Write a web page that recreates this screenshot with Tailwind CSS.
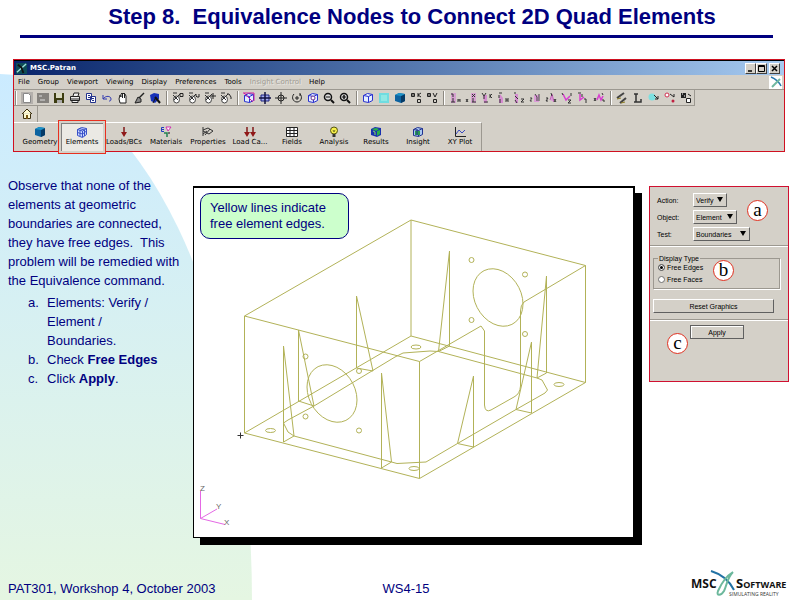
<!DOCTYPE html>
<html lang="en">
<head>
  <meta charset="UTF-8" />
  <meta name="viewport" content="width=device-width, initial-scale=1" />
  <title>Step 8. Equivalence Nodes to Connect 2D Quad Elements</title>
  <script src="https://cdn.jsdelivr.net/npm/@tailwindcss/browser@4"></script>
</head>
<body class="relative min-h-screen flex flex-col bg-white text-[#000080] font-['Liberation_Sans',sans-serif]">

  <!-- background sweep -->
  <div class="absolute left-0 top-[74px] bottom-0 -z-10 w-[252px] rounded-tr-[100%] bg-linear-to-b from-[#cbebff] to-[#e5f6e2]"></div>

  <!-- icon sprite -->
  <svg class="hidden">
    <symbol id="new" viewBox="0 0 12 12"><rect width="12" height="12" fill="#b4b0ac"/><path d="M2.500 1.500h5l2 2v7h-7z" fill="#fff" stroke="#888"/></symbol>
    <symbol id="open" viewBox="0 0 12 12"><rect y="1" width="12" height="10" fill="#85827e"/><path d="M2 4h3M3 8h5" stroke="#ddd"/></symbol>
    <symbol id="save" viewBox="0 0 12 12"><path d="M1 1h10v10H1z" fill="#3c3c10"/><path d="M3 1h6v5H3z" fill="#d8d8c0"/><path d="M4 8h5v3H4z" fill="#aaa"/></symbol>
    <symbol id="print" viewBox="0 0 12 12"><path d="M4 4l1-3h5l-1 3M1.500 4.500h9v4h-9zM3 8.500v2h6v-2" fill="#eee" stroke="#222"/><path d="M2 7h8" stroke="#222"/></symbol>
    <symbol id="copy" viewBox="0 0 12 12"><path d="M1.500 1.500h5v6h-5zM5.500 4.500h5v6h-5z" fill="#fff" stroke="#23338c"/><path d="M3 3.500h2M3 5.500h2M7 6.500h2M7 8.500h2" stroke="#23338c"/></symbol>
    <symbol id="undo" viewBox="0 0 12 12"><path d="M2 3v4h4M2 7c3-4 8-3 8 0 0 2-1 2-2 2" fill="none" stroke="#3038b0"/></symbol>
    <symbol id="hand" viewBox="0 0 12 12"><path d="M3 11L2 7l1-4 1 2 0-3 1-1 1 1 1-1 1 1 1 2v7z" fill="#fff" stroke="#222"/><path d="M5.500 2v4M7.500 2v4" stroke="#222"/></symbol>
    <symbol id="brush" viewBox="0 0 12 12"><path d="M11 1L6 6" stroke="#222" stroke-width="1.500"/><path d="M5 5l3 2v3l-6 1z" fill="#888" stroke="#222"/></symbol>
    <symbol id="render" viewBox="0 0 12 12"><path d="M1 3l4-2 5 1v5l-4 4-4-2z" fill="#1630b8"/><path d="M6 5l5 6" stroke="#111" stroke-width="2"/><path d="M4 11l3-6" stroke="#111"/></symbol>
    <symbol id="mouse" viewBox="0 0 12 12"><ellipse cx="4.500" cy="7.500" rx="3" ry="3.500" fill="#fff" stroke="#444"/><path d="M1 3l5 5M2 8l6-6M1 1h4" stroke="#333"/></symbol>
    <symbol id="pick1" viewBox="0 0 12 12"><use href="#mouse"/><path d="M8 1.500h3v3H8z" fill="none" stroke="#222"/></symbol>
    <symbol id="pick2" viewBox="0 0 12 12"><use href="#mouse"/><path d="M8 2v2l1 1h2V2" fill="none" stroke="#222"/></symbol>
    <symbol id="pick3" viewBox="0 0 12 12"><use href="#mouse"/><path d="M9 1v6M7 4h5" stroke="#222"/></symbol>
    <symbol id="pick4" viewBox="0 0 12 12"><use href="#mouse"/><path d="M7 2h2l2 3v2" fill="none" stroke="#222"/></symbol>
    <symbol id="cube" viewBox="0 0 12 12"><path d="M1.500 3.500l4-2 5 1v6l-4 2-5-1zM1.500 3.500l5 1v6M6.500 4.500l4-2" fill="#e4eeff" stroke="#2830d0"/></symbol>
    <symbol id="fit" viewBox="0 0 12 12"><use href="#cube"/><path d="M0 1h11v8M1 1l9 9" fill="none" stroke="#d020a0"/></symbol>
    <symbol id="center" viewBox="0 0 12 12"><path d="M2 3h8v6H2z" fill="#a5adf0" stroke="#1a2080"/><path d="M6 0v12M0 6h12" stroke="#101040" stroke-width="1.500"/></symbol>
    <symbol id="target" viewBox="0 0 12 12"><circle cx="6" cy="6" r="3" fill="none" stroke="#222"/><path d="M6 0v12M0 6h12" stroke="#222"/></symbol>
    <symbol id="spin" viewBox="0 0 12 12"><path d="M3 2c-3 3-1 8 3 8s6-5 3-8M9 1v3M4 6h4M6 4v4" fill="none" stroke="#222"/></symbol>
    <symbol id="fitall" viewBox="0 0 12 12"><use href="#cube"/><circle cx="6" cy="6" r="2" fill="#fff" stroke="#703090"/></symbol>
    <symbol id="zoomout" viewBox="0 0 12 12"><circle cx="5" cy="5" r="3.500" fill="#ddd" stroke="#111" stroke-width="1.500"/><path d="M8 8l3 3" stroke="#111" stroke-width="2"/><path d="M3 5h4" stroke="#111"/></symbol>
    <symbol id="zoomin" viewBox="0 0 12 12"><use href="#zoomout"/><path d="M5 3v4" stroke="#111" stroke-width="1.500"/></symbol>
    <symbol id="hidden" viewBox="0 0 12 12"><path d="M1 1h10v10H1z" fill="#6fdce0"/><path d="M3 3h6v6H3z" fill="#8fe8e4"/></symbol>
    <symbol id="solid" viewBox="0 0 12 12"><path d="M1 3l4-2 6 1v7l-4 2-6-2z" fill="#0b62a0"/><path d="M7 4l4-2v7l-4 2z" fill="#053a66"/><path d="M1 3l4-2 6 1-4 2z" fill="#1d93c8"/></symbol>
    <symbol id="label1" viewBox="0 0 12 12"><path d="M1.500 1.500h3v3h-3zM7.500 7.500h3v3h-3zM8 1v4M11 1L8 3l3 2M1 3h3" fill="none" stroke="#222"/></symbol>
    <symbol id="label2" viewBox="0 0 12 12"><path d="M1.500 1.500h3v3h-3zM7.500 7.500h3v3h-3zM7 1l2 4 2-4M1 3h3" fill="none" stroke="#222"/></symbol>
    <symbol id="view1" viewBox="0 0 12 12"><path d="M2 1h5v10H2z" fill="#d5a0d0"/><path d="M2 2h2v3M2 10h4M4 6v4M9 7v3M11 7v3M9 8h2" fill="none" stroke="#333"/></symbol>
    <symbol id="view2" viewBox="0 0 12 12"><path d="M6 1h5v10H6z" fill="#d5a0d0"/><path d="M1 7l2 3M3 7l-2 3M7 2l3 3M10 2L7 5M7 10h4M8 6v4" stroke="#333"/></symbol>
    <symbol id="view3" viewBox="0 0 12 12"><path d="M2 3h4v8H3z" fill="#d58cd0"/><path d="M1 1l2 3 2-3M3 4v3M9 2v4M11 2L9 4l2 2M3 10h4" fill="none" stroke="#333"/></symbol>
    <symbol id="view4" viewBox="0 0 12 12"><path d="M3 2l3 4v5H2V6z" fill="#d58cd0"/><path d="M2 1h3M2 3v3M3 7v4M9 6v4M11 6v4M9 8h2" fill="none" stroke="#333"/></symbol>
    <symbol id="view5" viewBox="0 0 12 12"><path d="M2 2h3v9H2z" fill="#d58cd0"/><path d="M1 1h2M2 4l3 3M2 8l2 3M8 7h3l-3 3h3" fill="none" stroke="#333"/></symbol>
    <symbol id="view6" viewBox="0 0 12 12"><path d="M5 3h5v7H5z" fill="#dc9cd8"/><path d="M1 6h2l-2 3h2M6 2l2 3v4M10 2v7" fill="none" stroke="#444"/></symbol>
    <symbol id="view7" viewBox="0 0 12 12"><path d="M5 8l2-6 2 8" fill="#dc9cd8" stroke="#c060b8"/><path d="M1 6h2l-2 3h2M6 1l1 3M9 7l2 3M11 7l-2 3" fill="none" stroke="#333"/></symbol>
    <symbol id="view8" viewBox="0 0 12 12"><path d="M2 2l3 6 4-4" fill="none" stroke="#d83cd0" stroke-width="1.500"/><path d="M1 1l1 2M10 1v3M7 8h3l-3 3h3" fill="none" stroke="#333"/></symbol>
    <symbol id="view9" viewBox="0 0 12 12"><path d="M3 2v6l4-3" fill="none" stroke="#d83cd0" stroke-width="1.500"/><path d="M1 1h3M5 2v3M8 6v2h2M8 10h2" fill="none" stroke="#333"/></symbol>
    <symbol id="view10" viewBox="0 0 12 12"><path d="M4 8l2-5 2 5 2-4" fill="none" stroke="#d83cd0" stroke-width="1.500"/><path d="M1 6l2 3M3 6L1 9M9 1l1 2M9 8h2v2" fill="none" stroke="#333"/></symbol>
    <symbol id="sweep" viewBox="0 0 12 12"><path d="M1 6l7-5M4 11l6-5" stroke="#444" stroke-width="2"/><path d="M1 7l4-1M5 11l4-1" stroke="#8a7a20"/></symbol>
    <symbol id="corner" viewBox="0 0 12 12"><path d="M2 2h4M4 2v8M2 10h7V7" fill="none" stroke="#333" stroke-width="1.500"/></symbol>
    <symbol id="plot" viewBox="0 0 12 12"><circle cx="4" cy="5" r="3.500" fill="#7ce0e0"/><path d="M6 3l4 4v-3M7 7h3" fill="none" stroke="#222"/></symbol>
    <symbol id="erase" viewBox="0 0 12 12"><circle cx="3" cy="3" r="2" fill="#fff" stroke="#d03050"/><path d="M6 2l4 3V2" fill="none" stroke="#222"/><circle cx="9" cy="9" r="1.500" fill="#c02040"/></symbol>
    <symbol id="lock" viewBox="0 0 12 12"><path d="M1 1h5v5H1z" fill="#222"/><path d="M2 2h1M4 4h1" stroke="#fff"/><path d="M8 2l3 2M6.500 6.500h4v4h-4z" fill="#fff" stroke="#222"/></symbol>
    <symbol id="home" viewBox="0 0 12 12"><path d="M1 6l5-5 5 5M2.500 5.500v5h7v-5" fill="#fffbd0" stroke="#3c3010"/><path d="M5 7h2v4H5z" fill="#7a5a18"/></symbol>
    <symbol id="elements" viewBox="0 0 12 12"><path d="M1.500 3.500l4-2 5 1v6l-4 3-5-2zM1.500 3.500l5 1.500v6M6.500 5l4-2.500M1.500 6.500l5 1.500 4-3M4 4v6M3.500 2.500l5 1.500v6" fill="#cfdcff" stroke="#3850c8"/></symbol>
    <symbol id="loads" viewBox="0 0 12 12"><path d="M6 1v6" stroke="#801818" stroke-width="1.500"/><path d="M3 6h6l-3 5z" fill="#901818"/></symbol>
    <symbol id="loadcase" viewBox="0 0 12 12"><path d="M3 1v6M9 1v6" stroke="#801818" stroke-width="1.500"/><path d="M0 6h6l-3 5zM6 6h6l-3 5z" fill="#901818"/></symbol>
    <symbol id="materials" viewBox="0 0 12 12"><path d="M4 1.500H1.500v4H4M1 3.500h3" stroke="#203cc0" fill="none"/><path d="M6 1l2 4 3-4z" fill="#fff" stroke="#d030b0"/><path d="M4 7h3v4" fill="none" stroke="#208050" stroke-width="1.500"/><path d="M8 7h2" stroke="#111"/></symbol>
    <symbol id="properties" viewBox="0 0 12 12"><path d="M1 1v9M1 4l5-2 5 3-4 3-6-3M3 9l5-6M1 8l4-3" fill="none" stroke="#333"/></symbol>
    <symbol id="fields" viewBox="0 0 12 12"><path d="M.5 1.500h11v9H.5zM.5 4.500h11M.5 7.500h11M4 2v9M8 2v9" fill="#fff" stroke="#222"/></symbol>
    <symbol id="analysis" viewBox="0 0 12 12"><circle cx="6" cy="4.500" r="3.500" fill="#f6ef4a" stroke="#555510"/><path d="M4.500 8h3v3h-3z" fill="#333"/><path d="M5 4l1 2 1-2" fill="none" stroke="#777720"/></symbol>
    <symbol id="results" viewBox="0 0 12 12"><path d="M1 3l4-2 6 1v7l-4 2-6-2z" fill="#1830b0"/><path d="M2 3l4-1 3 1-3 2zM7 5l3-1v4l-3 2z" fill="#28b048"/><path d="M3 5l2 1v3" stroke="#8cdc60" fill="none"/></symbol>
    <symbol id="insight" viewBox="0 0 12 12"><path d="M1.500 3.500l4-2 5 1v6l-4 2-5-1zM1.500 3.500l5 1v6M6.500 4.500l4-2" fill="#a8c8f0" stroke="#203090"/><path d="M3 5h5v4H3z" fill="#2a9a50"/><path d="M5 3v6" stroke="#203090"/></symbol>
    <symbol id="xyplot" viewBox="0 0 12 12"><path d="M1.500 1v9.500H12" fill="none" stroke="#222"/><path d="M2 8l3-4 3 3 3-3" fill="none" stroke="#3848c0"/></symbol>
  </svg>

  <header class="px-5 pt-[5px]">
    <h1 class="pl-6 text-center text-[22px] leading-6 font-bold whitespace-pre">Step 8.  Equivalence Nodes to Connect 2D Quad Elements</h1>
    <div class="mt-[6px] mr-[7px] h-[3px] bg-[#000080]"></div>
  </header>

  <!-- application window -->
  <section class="mt-[21px] ml-[13px] mr-[15px] border border-[#d01020] bg-[#d4d0c8] text-black font-['DejaVu_Sans',sans-serif] text-[7px]">
    <div class="flex h-[15px] items-center gap-[3px] border-t border-black bg-linear-to-r from-[#0a246a] to-[#a6caf0] pl-[2px] pr-1">
      <svg class="size-[11px]" viewBox="0 0 12 12"><rect width="12" height="12" fill="#0d4c58"/><path d="M1 10L11 1" stroke="#9fe0d8" stroke-width="1.500"/><path d="M2 2l4 3 2 6" fill="none" stroke="#111" stroke-width="2"/></svg>
      <span class="flex-1 font-bold text-white">MSC.Patran</span>
      <div class="flex">
        <button aria-label="Minimize" class="size-[11px] border border-white border-r-[#404040] border-b-[#404040] bg-[#d4d0c8]"><svg viewBox="0 0 9 9"><path d="M2 7h4" stroke="#000" stroke-width="1.500"/></svg></button>
        <button aria-label="Maximize" class="size-[11px] border border-white border-r-[#404040] border-b-[#404040] bg-[#d4d0c8]"><svg viewBox="0 0 9 9"><path d="M1.500 1.500h6v6h-6zM1.500 2.500h6" fill="none" stroke="#000"/></svg></button>
        <button aria-label="Close" class="ml-[2px] size-[11px] border border-white border-r-[#404040] border-b-[#404040] bg-[#d4d0c8]"><svg viewBox="0 0 9 9"><path d="M2 2l5 5M7 2L2 7" stroke="#000" stroke-width="1.500"/></svg></button>
      </div>
    </div>

    <div class="flex h-[15px] items-center justify-between border-b border-[#9c9890] pl-1 pr-[2px]">
      <nav class="flex gap-2">
        <button>File</button>
        <button>Group</button>
        <button>Viewport</button>
        <button>Viewing</button>
        <button>Display</button>
        <button>Preferences</button>
        <button>Tools</button>
        <button disabled class="text-[#a09c94] [text-shadow:1px_1px_0_#e8e6e2]">Insight Control</button>
        <button>Help</button>
      </nav>
      <svg class="size-[13px]" viewBox="0 0 13 13"><rect width="13" height="13" fill="#fff"/><path d="M2 1c5 2 8 5 10 9" fill="none" stroke="#2a7ab0" stroke-width="1.500"/><path d="M11 3L3 11" stroke="#70b8a0" stroke-width="2"/></svg>
    </div>

    <div id="toolbar" class="flex h-4 w-fit items-center gap-[3px] border-r border-b border-[#9c9890] pl-px"></div>

    <div class="flex h-4 items-center pl-[7px]">
      <button aria-label="Home" class="flex h-4 w-[17px] items-center border-r border-[#9c9890]"><svg class="size-3"><use href="#home"/></svg></button>
    </div>

    <div id="tabs" class="flex h-[29px] w-fit border-t border-r border-white border-r-[#9c9890] pl-[5px]"></div>
  </section>

  <main class="mt-6 flex flex-1 items-start pr-[11px]">
    <div class="w-[193px] shrink-0 pl-2 text-[13px] leading-[19px]">
      <p class="whitespace-pre">Observe that none of the
elements at geometric
boundaries are connected,
they have free edges.  This
problem will be remedied with
the Equivalence command.</p>
      <ol class="mt-[3px] ml-5">
        <li class="flex"><span class="w-[19px]">a.</span><span>Elements: Verify /<br>Element /<br>Boundaries.</span></li>
        <li class="flex"><span class="w-[19px]">b.</span><span>Check <b>Free Edges</b></span></li>
        <li class="flex"><span class="w-[19px]">c.</span><span>Click <b>Apply</b>.</span></li>
      </ol>
    </div>

    <figure class="relative mt-[10px] min-w-0 flex-1 border border-t-2 border-r-2 border-black bg-white shadow-[7px_7px_0_#000]">
      <figcaption class="absolute left-[6px] top-[5px] w-[149px] rounded-[10px] border border-[#000080] bg-[#ccffcc] py-[6px] pl-[9px] text-[13px] leading-4">Yellow lines indicate<br>free element edges.</figcaption>
      <svg class="block w-full" viewBox="194 188 439 349" fill="none" stroke="#b2b258">
        <!-- outer box, right front edge broken by the notch -->
        <path d="M244.500 316L411 220 585.500 265.500V382.500L419.500 478.500 244.500 433V316L419.500 361.500V478.500M411 220V336L585.500 382.500M411 336L244.500 433"/>
        <path d="M585.500 265.500L524 302Q520.500 305 520.500 311V386Q520 394 514 397L491 410Q485 413 484.500 405V331L481 326 419.500 361.500"/>
        <!-- flange inner loop -->
        <path d="M283.500 423L288 432 294 436 391.500 462 397 463.500 426 462 457.500 443.500 516 409.500 545 393 547.500 390 542 380 537 378 438.500 351.500 430 351 403 353 395 357 314 406 288 420Z"/>
        <!-- ribs -->
        <path d="M298.500 330V401L314 406ZM356.500 296V368L373 371ZM283.500 346V442L294 436ZM381.500 373V468L391.500 462ZM449.500 251V346L438.500 351.500ZM546.500 276V373L537 378ZM531.500 342V413L516 409.500ZM473.500 376V447L457.500 443.500Z"/>
        <!-- bores and bolt holes -->
        <circle r="1" transform="matrix(25 6.500 0 28 498 297.500)" vector-effect="non-scaling-stroke"/>
        <circle r="1" transform="matrix(25 6.500 0 28 332 393.500)" vector-effect="non-scaling-stroke"/>
        <circle cx="471.500" cy="260" r="2.500"/><circle cx="525" cy="274.500" r="2.500"/><circle cx="471.500" cy="320" r="2.500"/><circle cx="525" cy="334" r="2.500"/>
        <circle cx="305.500" cy="356.500" r="2.500"/><circle cx="359" cy="371" r="2.500"/><circle cx="305.500" cy="416.500" r="2.500"/><circle cx="359" cy="430.500" r="2.500"/>
        <ellipse cx="270.500" cy="430.500" rx="5" ry="2"/><ellipse cx="414" cy="468.500" rx="5" ry="2"/><ellipse cx="559" cy="384.500" rx="5" ry="2"/><ellipse cx="416" cy="347" rx="5" ry="2"/>
        <path d="M237.500 435.500h6M240.500 432.500v6" stroke="#333"/>
        <!-- axis triad -->
        <path d="M200.500 491V518.500L217 509M200.500 518.500L225 524.500" stroke="#e468e4"/>
        <g fill="#666" stroke="none" font-family="Liberation Sans, sans-serif" font-size="8">
          <text x="200" y="491">Z</text><text x="216" y="509">Y</text><text x="224" y="525">X</text>
        </g>
      </svg>
    </figure>

    <!-- Elements form -->
    <form class="relative mt-[10px] ml-[14px] h-[196px] w-[140px] shrink-0 border border-[#d01030] bg-[#d4d0c8] text-[7px] leading-[9px] text-black">
      <div class="flex flex-col gap-[3px] border-b border-[#9c9890] pt-[6px] pb-1 pl-[7px] shadow-[0_1px_0_#fff]">
        <div class="flex items-center">
          <label for="action" class="w-9">Action:</label>
          <span class="relative">
            <select id="action" class="block h-[14px] w-[34px] appearance-none border border-white border-r-[#606060] border-b-[#606060] pl-[2px]"><option>Verify</option></select>
            <svg class="pointer-events-none absolute right-1 top-1 h-[5px] w-[6px]" viewBox="0 0 6 5"><path d="M0 0h6L3 5z"/></svg>
          </span>
        </div>
        <div class="flex items-center">
          <label for="object" class="w-9">Object:</label>
          <span class="relative">
            <select id="object" class="block h-[14px] w-[44px] appearance-none border border-white border-r-[#606060] border-b-[#606060] pl-[2px]"><option>Element</option></select>
            <svg class="pointer-events-none absolute right-1 top-1 h-[5px] w-[6px]" viewBox="0 0 6 5"><path d="M0 0h6L3 5z"/></svg>
          </span>
        </div>
        <div class="flex items-center">
          <label for="test" class="w-9">Test:</label>
          <span class="relative">
            <select id="test" class="block h-[14px] w-[57px] appearance-none border border-white border-r-[#606060] border-b-[#606060] pl-[2px]"><option>Boundaries</option></select>
            <svg class="pointer-events-none absolute right-1 top-1 h-[5px] w-[6px]" viewBox="0 0 6 5"><path d="M0 0h6L3 5z"/></svg>
          </span>
        </div>
      </div>

      <fieldset class="mt-2 ml-[3px] mr-2 h-[35px] border border-[#9c9890] pl-1 shadow-[1px_1px_0_#fff]">
        <legend class="px-px">Display Type</legend>
        <label class="flex items-center gap-[2px]"><input type="radio" name="display" checked class="size-[7px] appearance-none rounded-full border border-[#707070] bg-white checked:bg-black checked:shadow-[inset_0_0_0_1px_#fff]">Free Edges</label>
        <label class="mt-[3px] flex items-center gap-[2px]"><input type="radio" name="display" class="size-[7px] appearance-none rounded-full border border-[#707070] bg-white checked:bg-black">Free Faces</label>
      </fieldset>

      <div class="mt-[10px] border-b border-[#9c9890] pb-[6px] pl-[3px] pr-[14px] shadow-[0_1px_0_#fff]">
        <button type="button" class="block h-[14px] w-full border border-white border-r-[#606060] border-b-[#606060]">Reset Graphics</button>
      </div>
      <button type="submit" class="mt-[5px] ml-10 block h-[14px] w-[54px] border border-[#606060] shadow-[inset_1px_1px_0_#fff]">Apply</button>

      <!-- step callouts -->
      <span class="absolute left-[97px] top-[13px] size-[21px] rounded-full border border-[#e03020] bg-white text-center font-['Liberation_Serif',serif] text-[19px] leading-[18px]">a</span>
      <span class="absolute left-[63px] top-[73px] size-[21px] rounded-full border border-[#e03020] bg-white text-center font-['Liberation_Serif',serif] text-[19px] leading-[18px]">b</span>
      <span class="absolute left-[17px] top-[146px] size-[21px] rounded-full border border-[#e03020] bg-white text-center font-['Liberation_Serif',serif] text-[19px] leading-[18px]">c</span>
    </form>
  </main>

  <footer class="flex items-end justify-between pl-2 pr-[10px] pb-[2px] text-[13px] leading-[18px]">
    <span class="flex-1">PAT301, Workshop 4, October 2003</span>
    <span class="pl-[14px]">WS4-15</span>
    <span class="flex flex-1 justify-end">
      <svg class="h-[30px] w-[100px]" viewBox="690 568 100 30" font-family="Open Sans, sans-serif" font-weight="bold">
        <path d="M711 571c10 3 18 9 23 19" fill="none" stroke="#2272a4" stroke-width="2"/>
        <path d="M733 572c-5 3-11 10-15 19-2 5 3 5 6 0 3-6 3-13 9-19" fill="none" stroke="#6cb89c" stroke-width="2"/>
        <text x="691" y="588" font-size="12" fill="#111">MSC</text>
        <text x="736" y="588" font-size="13" fill="#111">S<tspan font-size="9">OFTWARE</tspan></text>
        <text x="729" y="596" font-size="5" font-weight="normal" fill="#333">SIMULATING REALITY</text>
      </svg>
    </span>
  </footer>

<script>
  const groups = [
    ["new", "open", "save", "print", "copy", "undo", "hand", "brush", "render"],
    ["pick1", "pick2", "pick3", "pick4"],
    ["fit", "center", "target", "spin", "fitall", "zoomout", "zoomin"],
    ["cube", "hidden", "solid", "label1", "label2"],
    ["view1", "view2", "view3", "view4", "view5", "view6", "view7", "view8", "view9", "view10"],
    ["sweep", "corner", "plot", "erase", "lock"],
  ];

  const tabs = [
    ["solid", "Geometry"], ["elements", "Elements"], ["loads", "Loads/BCs"], ["materials", "Materials"],
    ["properties", "Properties"], ["loadcase", "Load Ca..."], ["fields", "Fields"], ["analysis", "Analysis"],
    ["results", "Results"], ["insight", "Insight"], ["xyplot", "XY Plot"],
  ];

  document.getElementById("toolbar").innerHTML = groups.map((icons) => `
    <div class="flex border-l border-[#8c8880] pl-[3px] shadow-[inset_1px_0_0_#fff]">
      ${icons.map((id) => `<button aria-label="${id}" class="flex h-[14px] w-4 items-center justify-center"><svg class="size-3"><use href="#${id}"/></svg></button>`).join("")}
    </div>`).join("");

  document.getElementById("tabs").innerHTML = tabs.map(([id, label]) => {
    const active = label === "Elements";
    return `<button class="${active
      ? "relative z-10 flex w-[42px] flex-col items-center bg-[#ebe9e4] pt-[3px] outline-1 outline-offset-2 outline-[#e83020] shadow-[0_0_0_2px_#d4d0c8,inset_1px_1px_0_#808080]"
      : "flex w-[42px] flex-col items-center pt-[3px]"}">
      <svg class="size-3 shrink-0"><use href="#${id}"/></svg><span class="leading-[9px] whitespace-nowrap">${label}</span></button>`;
  }).join("");
</script>

</body>
</html>
